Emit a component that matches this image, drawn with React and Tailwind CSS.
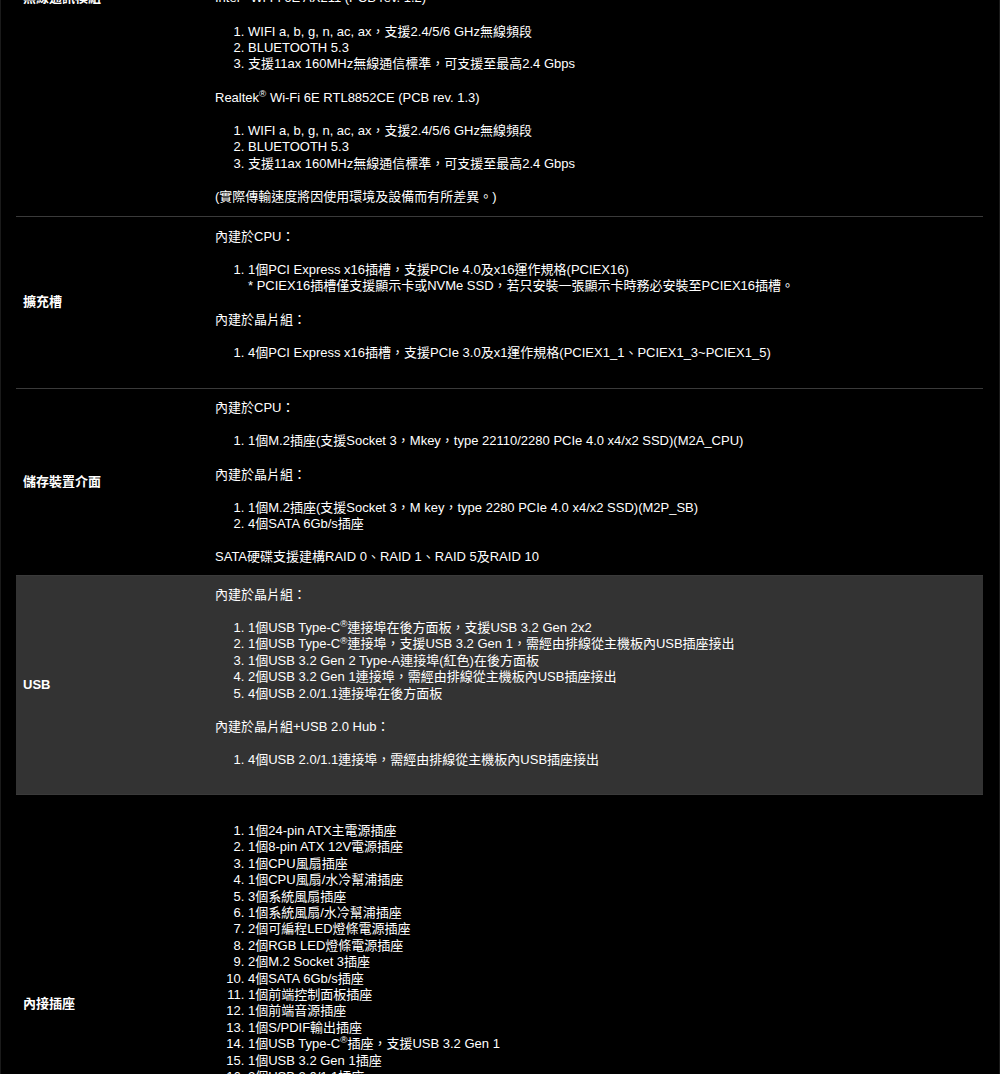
import React from "react";

const R = () => <sup>®</sup>;

function OL({ children }) {
  return <ol className="list-decimal pl-[33px]">{children}</ol>;
}

function Row({ label, children, shaded = false, border = true, contentClass = "pt-[11px] pb-[11px]" }) {
  return (
    <div
      className={
        "flex " +
        (border ? "border-t border-[#3a3a3a] " : "") +
        (shaded ? "bg-[#333333]" : "")
      }
    >
      <div className="w-[199px] shrink-0 pl-[7px] flex items-center font-bold">{label}</div>
      <div className={"flex-1 flex flex-col gap-[16.8px] " + contentClass}>{children}</div>
    </div>
  );
}

export default function App() {
  return (
    <div
      className="min-h-screen bg-black text-white border-x border-[#1a1a1a] overflow-hidden text-[13px] leading-[16.4px]"
      style={{ fontFamily: '"Liberation Sans", Arial, "Noto Sans CJK TC", sans-serif' }}
    >
      <div className="ml-[15px] w-[967px] -mt-[219px]">
        <Row label="無線通訊模組" border={false} contentClass="pt-[11px] pb-[10.5px]">
          <p>
            Intel<R /> Wi-Fi 6E AX211 (PCB rev. 1.1)
          </p>
          <OL>
            <li>WIFI a, b, g, n, ac, ax，支援2.4/5/6 GHz無線頻段</li>
            <li>BLUETOOTH 5.3</li>
            <li>支援11ax 160MHz無線通信標準，可支援至最高2.4 Gbps</li>
          </OL>
          <p>
            MediaTek<R /> Wi-Fi 6E MT7922 (PCB rev. 1.1)
          </p>
          <OL>
            <li>WIFI a, b, g, n, ac, ax，支援2.4/5/6 GHz無線頻段</li>
            <li>BLUETOOTH 5.3</li>
            <li>支援11ax 160MHz無線通信標準，可支援至最高2.4 Gbps</li>
          </OL>
          <p>
            Intel<R /> Wi-Fi 6E AX211 (PCB rev. 1.2)
          </p>
          <OL>
            <li>WIFI a, b, g, n, ac, ax，支援2.4/5/6 GHz無線頻段</li>
            <li>BLUETOOTH 5.3</li>
            <li>支援11ax 160MHz無線通信標準，可支援至最高2.4 Gbps</li>
          </OL>
          <p>
            Realtek<R /> Wi-Fi 6E RTL8852CE (PCB rev. 1.3)
          </p>
          <OL>
            <li>WIFI a, b, g, n, ac, ax，支援2.4/5/6 GHz無線頻段</li>
            <li>BLUETOOTH 5.3</li>
            <li>支援11ax 160MHz無線通信標準，可支援至最高2.4 Gbps</li>
          </OL>
          <p>(實際傳輸速度將因使用環境及設備而有所差異。)</p>
        </Row>

        <Row label="擴充槽" contentClass="pt-[12px] pb-[27px]">
          <p>內建於CPU：</p>
          <OL>
            <li>
              1個PCI Express x16插槽，支援PCIe 4.0及x16運作規格(PCIEX16)
              <br />* PCIEX16插槽僅支援顯示卡或NVMe SSD，若只安裝一張顯示卡時務必安裝至PCIEX16插槽。
            </li>
          </OL>
          <p>內建於晶片組：</p>
          <OL>
            <li>4個PCI Express x16插槽，支援PCIe 3.0及x1運作規格(PCIEX1_1、PCIEX1_3~PCIEX1_5)</li>
          </OL>
        </Row>

        <Row label="儲存裝置介面" contentClass="pt-[11px] pb-[9px]">
          <p>內建於CPU：</p>
          <OL>
            <li>1個M.2插座(支援Socket 3，Mkey，type 22110/2280 PCIe 4.0 x4/x2 SSD)(M2A_CPU)</li>
          </OL>
          <p>內建於晶片組：</p>
          <OL>
            <li>1個M.2插座(支援Socket 3，M key，type 2280 PCIe 4.0 x4/x2 SSD)(M2P_SB)</li>
            <li>4個SATA 6Gb/s插座</li>
          </OL>
          <p>SATA硬碟支援建構RAID 0、RAID 1、RAID 5及RAID 10</p>
        </Row>

        <Row label="USB" shaded contentClass="pt-[11px] pb-[25.5px]">
          <p>內建於晶片組：</p>
          <OL>
            <li>
              1個USB Type-C<R />連接埠在後方面板，支援USB 3.2 Gen 2x2
            </li>
            <li>
              1個USB Type-C<R />連接埠，支援USB 3.2 Gen 1，需經由排線從主機板內USB插座接出
            </li>
            <li>1個USB 3.2 Gen 2 Type-A連接埠(紅色)在後方面板</li>
            <li>2個USB 3.2 Gen 1連接埠，需經由排線從主機板內USB插座接出</li>
            <li>4個USB 2.0/1.1連接埠在後方面板</li>
          </OL>
          <p>內建於晶片組+USB 2.0 Hub：</p>
          <OL>
            <li>4個USB 2.0/1.1連接埠，需經由排線從主機板內USB插座接出</li>
          </OL>
        </Row>

        <Row label="內接插座" contentClass="pt-[28px] pb-[29px]">
          <OL>
            <li>1個24-pin ATX主電源插座</li>
            <li>1個8-pin ATX 12V電源插座</li>
            <li>1個CPU風扇插座</li>
            <li>1個CPU風扇/水冷幫浦插座</li>
            <li>3個系統風扇插座</li>
            <li>1個系統風扇/水冷幫浦插座</li>
            <li>2個可編程LED燈條電源插座</li>
            <li>2個RGB LED燈條電源插座</li>
            <li>2個M.2 Socket 3插座</li>
            <li>4個SATA 6Gb/s插座</li>
            <li>1個前端控制面板插座</li>
            <li>1個前端音源插座</li>
            <li>1個S/PDIF輸出插座</li>
            <li>
              1個USB Type-C<R />插座，支援USB 3.2 Gen 1
            </li>
            <li>1個USB 3.2 Gen 1插座</li>
            <li>2個USB 2.0/1.1插座</li>
            <li>1個Thunderbolt™ (USB4<R />)插座</li>
            <li>1個TPM插座</li>
            <li>1個Clear CMOS接針</li>
            <li>1個COM連接埠插座</li>
            <li>1個喇叭插座</li>
            <li>1個Thermal sensor插座</li>
          </OL>
        </Row>
      </div>
    </div>
  );
}
